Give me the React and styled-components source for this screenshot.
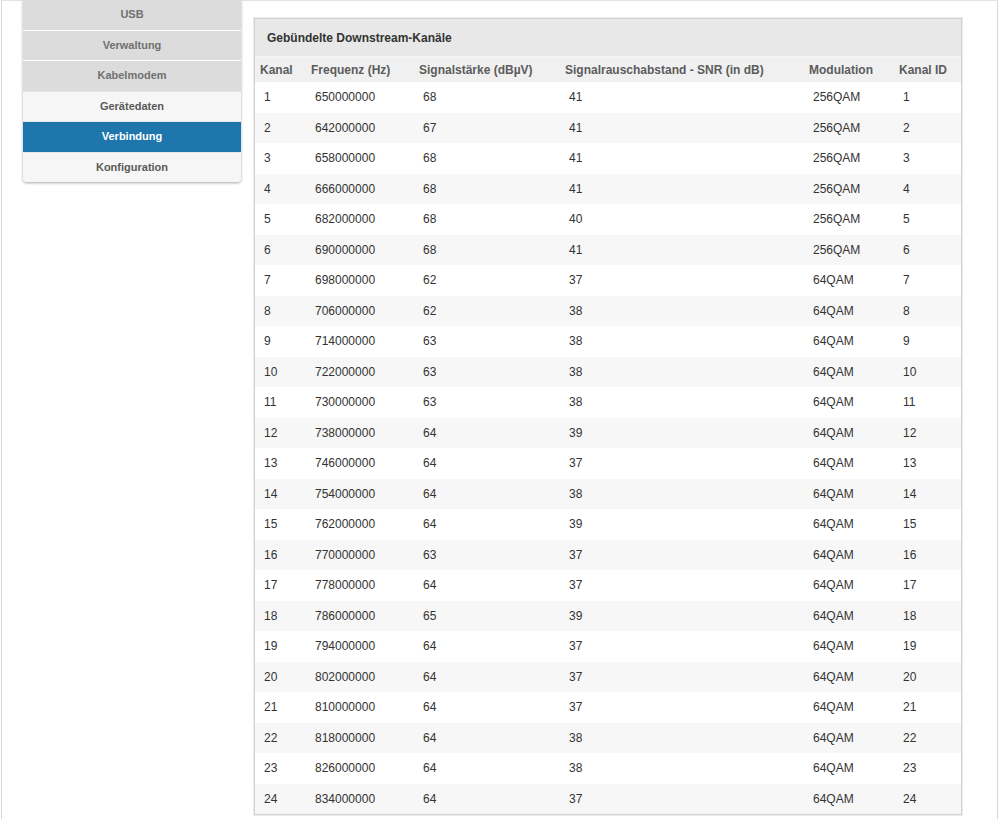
import React from "react";
import styled, { createGlobalStyle } from "styled-components";

const GlobalStyle = createGlobalStyle`
  html, body {
    margin: 0;
    padding: 0;
    background: #fff;
    font-family: "Liberation Sans", Arial, sans-serif;
  }
`;

const Frame = styled.div`
  box-sizing: border-box;
  width: 997px;
  min-height: 819px;
  margin-left: 1px;
  border-left: 1px solid #d8d8d8;
  border-right: 1px solid #d8d8d8;
  border-top: 1px solid #e4e4e4;
  display: flex;
  align-items: flex-start;
  padding-left: 21px;
  gap: 13px;
`;

const Sidebar = styled.nav`
  width: 218px;
  margin-top: -1px;
  border-radius: 0 0 4px 4px;
  box-shadow: 0 1px 3px rgba(0, 0, 0, 0.35);
  overflow: hidden;
  display: flex;
  flex-direction: column;
`;

const NavItem = styled.div`
  height: 29.5px;
  line-height: 29.5px;
  text-align: center;
  font-size: 11px;
  font-weight: bold;
  border-top: ${(p) => (p.$first ? "none" : "1px solid")};
  border-top-color: ${(p) => (p.$tone === "dark" ? "#fff" : "#e6e6e6")};
  background: ${(p) =>
    p.$active ? "#1f76ad" : p.$tone === "dark" ? "#dcdcdc" : "#f6f6f6"};
  color: ${(p) => (p.$active ? "#fff" : p.$tone === "dark" ? "#707070" : "#5a5a5a")};
`;

const Panel = styled.section`
  margin-top: 17px;
  width: 706px;
  border: 1px solid #d2d2d2;
  box-shadow: 0 0 0 1px #ececec;
`;

const PanelTitle = styled.div`
  height: 37px;
  line-height: 38px;
  padding-left: 12px;
  background: #e8e8e8;
  border-bottom: 1px solid #f4f4f4;
  font-size: 12px;
  font-weight: bold;
  color: #333;
`;

const Table = styled.table`
  width: 100%;
  border-collapse: collapse;
  table-layout: fixed;
  font-size: 12px;
`;

const HeadCell = styled.th`
  height: 25px;
  padding: 0 0 0 5px;
  text-align: left;
  font-weight: bold;
  color: #5c5c5c;
  background: #f0f0f0;
  white-space: nowrap;
`;

const Row = styled.tr`
  height: 30.5px;
  background: ${(p) => (p.$odd ? "#f7f7f7" : "#fff")};
`;

const Cell = styled.td`
  padding: 0 0 0 9px;
  color: #333;
`;

const nav = [
  { label: "USB", tone: "dark" },
  { label: "Verwaltung", tone: "dark" },
  { label: "Kabelmodem", tone: "dark" },
  { label: "Gerätedaten", tone: "light" },
  { label: "Verbindung", tone: "light", active: true },
  { label: "Konfiguration", tone: "light" },
];

const columns = [
  { title: "Kanal", width: 51 },
  { title: "Frequenz (Hz)", width: 108 },
  { title: "Signalstärke (dBµV)", width: 146 },
  { title: "Signalrauschabstand - SNR (in dB)", width: 244 },
  { title: "Modulation", width: 90 },
  { title: "Kanal ID", width: 67 },
];

const power = [68, 67, 68, 68, 68, 68, 62, 62, 63, 63, 63, 64, 64, 64, 64, 63, 64, 65, 64, 64, 64, 64, 64, 64];
const snr = [41, 41, 41, 41, 40, 41, 37, 38, 38, 38, 38, 39, 37, 38, 39, 37, 37, 39, 37, 37, 37, 38, 38, 37];
const freqs = [650, 642, 658, 666, 682, 690];

const channels = power.map((p, i) => ({
  id: i + 1,
  freq: (i < 6 ? freqs[i] : 698 + (i - 6) * 8) * 1000000,
  power: p,
  snr: snr[i],
  mod: i < 6 ? "256QAM" : "64QAM",
}));

export default function App() {
  return (
    <>
      <GlobalStyle />
      <Frame>
        <Sidebar>
          {nav.map((n, i) => (
            <NavItem key={n.label} $first={i === 0} $tone={n.tone} $active={n.active}>
              {n.label}
            </NavItem>
          ))}
        </Sidebar>
        <Panel>
          <PanelTitle>Gebündelte Downstream-Kanäle</PanelTitle>
          <Table>
            <colgroup>
              {columns.map((c) => (
                <col key={c.title} style={{ width: c.width }} />
              ))}
            </colgroup>
            <thead>
              <tr>
                {columns.map((c) => (
                  <HeadCell key={c.title}>{c.title}</HeadCell>
                ))}
              </tr>
            </thead>
            <tbody>
              {channels.map((c, i) => (
                <Row key={c.id} $odd={i % 2 === 1}>
                  <Cell>{c.id}</Cell>
                  <Cell>{c.freq}</Cell>
                  <Cell>{c.power}</Cell>
                  <Cell>{c.snr}</Cell>
                  <Cell>{c.mod}</Cell>
                  <Cell>{c.id}</Cell>
                </Row>
              ))}
            </tbody>
          </Table>
        </Panel>
      </Frame>
    </>
  );
}
